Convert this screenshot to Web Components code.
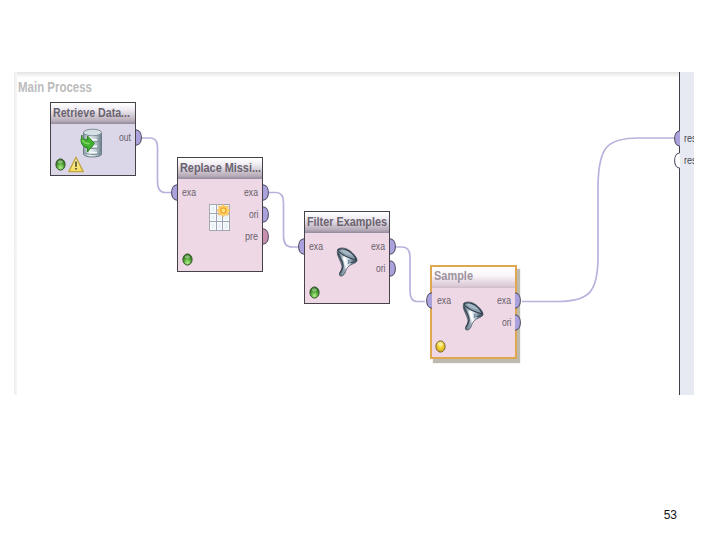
<!DOCTYPE html>
<html lang="en">
<head>
<meta charset="utf-8">
<title>Main Process</title>
<style>
html,body{margin:0;width:720px;height:540px;overflow:hidden;background:#fff;font-family:"Liberation Sans",Arial,sans-serif}
</style>
</head>
<body>
<process-slide></process-slide>
<script>
// One line of text condensed to an exact width.
customElements.define('fit-label', class extends HTMLElement {
  connectedCallback() {
    const w = +this.getAttribute('w'), s = +this.getAttribute('size') || 12, h = Math.ceil(s * 1.3);
    const r = this.attachShadow({mode: 'open'});
    r.innerHTML = `<style>:host{display:block;flex:none;width:${w}px;height:${h}px}svg{display:block;overflow:visible}
      text{font-family:"Liberation Sans",Arial,sans-serif;fill:currentColor}</style>
      <svg width="${w}" height="${h}"><text x="0" y="${Math.round(s)}" font-size="${s}" font-weight="${this.getAttribute('weight') || 400}" textLength="${w}" lengthAdjust="spacingAndGlyphs"></text></svg>`;
    r.querySelector('text').textContent = this.getAttribute('text');
  }
});

// Half-round connector on the edge of a box.
customElements.define('port-knob', class extends HTMLElement {
  connectedCallback() {
    const left = this.getAttribute('side') === 'left';
    const fill = this.getAttribute('fill') || '#aaa2dc';
    this.attachShadow({mode: 'open'}).innerHTML = `<style>:host{display:block;flex:none;width:6px;height:17px}svg{display:block}</style>
      <svg width="6" height="17" ${left ? 'style="transform:scaleX(-1)"' : ''}><path d="M0 .7C3.2 1 5.4 4.2 5.4 8.500S3.200 16 0 16.300" fill="${fill}" stroke="#565168" stroke-width="1.1"/></svg>`;
  }
});

customElements.define('status-light', class extends HTMLElement {
  connectedCallback() {
    const y = this.getAttribute('color') === 'yellow';
    const [a, b, c, d] = y ? ['#fff27c', '#ecca2e', '#cfa21a', '#77622d'] : ['#b6f08e', '#55ac38', '#2b7618', '#3a4f33'];
    this.attachShadow({mode: 'open'}).innerHTML = `<style>:host{display:block}svg{display:block}</style>
      <svg width="11" height="13"><defs><radialGradient id="g" cx=".5" cy="${y ? .35 : .78}" r=".65"><stop offset="0" stop-color="${a}"/><stop offset=".55" stop-color="${b}"/><stop offset="1" stop-color="${c}"/></radialGradient></defs>
      <ellipse cx="5.5" cy="6.5" rx="4.6" ry="5.6" fill="url(#g)" stroke="${d}"/><ellipse cx="5.3" cy="3.8" rx="2.6" ry="1.6" fill="#fff" opacity=".4"/></svg>`;
  }
});

customElements.define('warning-sign', class extends HTMLElement {
  connectedCallback() {
    this.attachShadow({mode: 'open'}).innerHTML = `<style>:host{display:block}svg{display:block}</style>
      <svg width="16" height="17"><defs><linearGradient id="g" x2="0" y2="1"><stop offset="0" stop-color="#fffbc0"/><stop offset="1" stop-color="#f5dc58"/></linearGradient></defs>
      <path d="M8 1.2 15.2 15.6H.8Z" fill="url(#g)" stroke="#c0a545" stroke-width="1.4" stroke-linejoin="round"/>
      <path d="M8 5.500v5.200" stroke="#3c3520" stroke-width="1.5"/><path d="M8 12v1.600" stroke="#3c3520" stroke-width="1.5"/></svg>`;
  }
});

const ICONS = {
  database: `<svg width="28" height="30"><defs><linearGradient id="b"><stop offset="0" stop-color="#8b99a3"/><stop offset=".35" stop-color="#edf3f6"/><stop offset=".65" stop-color="#c3d0d7"/><stop offset="1" stop-color="#667985"/></linearGradient></defs>
    <path d="M5.500 4.500V26c0 4 18 4 18 0V4.500" fill="url(#b)" stroke="#6d7e8b"/>
    <ellipse cx="14.500" cy="4.500" rx="9" ry="3.300" fill="#d6e1e6" stroke="#7d8d99"/>
    <path d="M7 12c2 2.500 14 2.500 16 0M7 18.500c2 2.500 14 2.500 16 0M7 24.500c2 2.500 14 2.500 16 0" fill="none" stroke="#83929d" stroke-width="1.200"/>
    <path d="M14 11.800h5M15 18.400h4M12 24.500h7" stroke="#f8fcfd" stroke-width="1.600"/>
    <path d="M4 7C3.300 10 5 11.700 9.500 11.900V8L16.500 15.500 9.500 24v-4.300C5.500 19.300 3 16 3 12Z" fill="#43b12f" stroke="#2a8420" stroke-width="1"/>
    <path d="M4.500 12c1 2.500 3 3.700 7 3.700" fill="none" stroke="#86da66" stroke-width="1.400"/></svg>`,
  table: `<svg width="24" height="30"><rect x="1.500" y="3.500" width="20" height="26" fill="#f7fbfd" stroke="#a3a7b4"/>
    <path d="M8.500 3.500v26M14.500 3.500v26M1.500 12.500h20M1.500 20.500h20" stroke="#a0a4b2"/>
    <path d="M3.500 5.500h3v5h-3zM3.500 14.500h3v4h-3zM10 14.500h3v4h-3zM16.700 14.500h3v4h-3zM3.500 22.500h3v5h-3zM10 22.500h3v5h-3zM16.700 22.500h3v5h-3z" fill="#e7f0f5"/>
    <path d="m15.300 3.300 1.800 2.300 3-.6-.3 2.900 2.400 1.600-2.400 1.700.4 3-3-.4-1.900 2.200-1.700-2.400-3 .5.600-3-2.500-1.600 2.500-1.600-.5-3 2.900.5Z" fill="#ffd468" stroke="#f5b24c" stroke-width=".7"/>
    <circle cx="15.400" cy="9.400" r="2.600" fill="#ffe27c" stroke="#eda12c" stroke-width="1.200"/></svg>`,
  funnel: `<svg width="24" height="30"><defs><linearGradient id="f" x1="0" y1=".6" x2="1" y2=".35"><stop offset="0" stop-color="#55636f"/><stop offset=".28" stop-color="#8fa5b5"/><stop offset=".42" stop-color="#fbfdfe"/><stop offset=".58" stop-color="#c5d5df"/><stop offset=".75" stop-color="#6f8698"/><stop offset="1" stop-color="#465665"/></linearGradient></defs>
    <path d="M2 2C7-.5 12.500 2 16.500 6c2.700 2.600 4.800 5.500 4.500 7.800-.5 2.200-3.800 2.600-6.500 4.200-3 1.800-4.200 4-5 6.500-.7 2.300-2 4.300-4 4.500-2.200.2-2.700-1.500-1.700-3.200C5.500 23 6.500 21 5.800 18.500 5 14.500.8 8.500 1.200 4.500Z" fill="url(#f)" stroke="#46535f" stroke-width=".8"/>
    <path d="M2 3C6.500 0 13 3 16.500 7c1.600 1.800 3 3.900 3.800 6C15 11.500 5 9 2 3Z" fill="#8ba0b0" stroke="#303c48" stroke-width="1.100"/>
    <path d="M4.500 3.300c4.500-1.100 9 1.700 12.300 5.400C12.500 8.300 7.300 6.400 4.500 3.300Z" fill="#a9bac6"/>
    <path d="M2 5.500c1.200 4 4.300 8 5 12.500.4 3-1.500 5.500-3 8" fill="none" stroke="#384450" stroke-width="1.300"/>
    <path d="M6 10c1.800 3 2.600 5.500 2.700 8.500l1.800-1c.2-2.300-.4-4.300-1.500-6.200Z" fill="#fff"/>
    <path d="M12.500 12.800c.8 1.300.6 2.600-.3 4" fill="none" stroke="#71879a" stroke-width="1.600"/>
    <path d="M14.500 15.800c1.600-.8 3.300-1.200 5-1.500" fill="none" stroke="#3f4f5e" stroke-width="1.200"/>
    <path d="M9.300 22.500 6 27.300" stroke="#8fa0ac" stroke-width="1.200"/></svg>`
};

customElements.define('op-icon', class extends HTMLElement {
  connectedCallback() {
    this.attachShadow({mode: 'open'}).innerHTML = `<style>:host{display:block}svg{display:block}</style>` + ICONS[this.getAttribute('name')];
  }
});

customElements.define('operator-node', class extends HTMLElement {
  connectedCallback() {
    const a = n => this.getAttribute(n);
    const sel = this.hasAttribute('selected');
    const W = {exa: 14, ori: 9.5, out: 12, pre: 13};
    const outs = a('outs').split(' ').map(o => `<div class="row"><fit-label w="${W[o]}" size="11" text="${o}"></fit-label><port-knob ${o === 'pre' ? 'fill="#c98fae"' : ''}></port-knob></div>`).join('');
    const inp = a('in') ? `<div class="row"><port-knob side="left"></port-knob><fit-label w="${W[a('in')]}" size="11" text="${a('in')}"></fit-label></div>` : '';
    this.attachShadow({mode: 'open'}).innerHTML = `<style>
      :host{display:flex;flex-direction:column;box-sizing:border-box;width:${sel ? 87 : 86}px;height:${a('h')}px;
        border:${sel ? '2px solid #dfa850' : '1px solid #45424a'};background:${a('tone') || '#eed8e5'};
        ${sel ? 'box-shadow:3px 4px 1px #bdbab0;' : ''}}
      header{flex:none;height:21px;box-sizing:border-box;padding:0 0 0 2px;
        background:linear-gradient(${sel ? '#fff,#faf5f9 40%,#dccbd8 88%,#cfbdc9' : '#fff,#f1edf3 30%,#b7acb8 85%,#93899b'});color:${sel ? '#9d939e' : '#6a6370'}}
      header fit-label{margin-top:${sel ? -1 : 0}px}
      .body{flex:1;position:relative;display:flex;justify-content:space-between;padding-top:${sel ? 1 : 2}px;color:#66606b}
      .row{display:flex;align-items:center;height:22px;gap:${sel ? 4 : 5}px}
      .in{margin-left:${sel ? -6 : -7}px}
      .in .row{gap:5px}
      .out{margin-right:${sel ? -6 : -7}px;margin-left:auto}
      .out .row{justify-content:flex-end}
      op-icon{position:absolute;left:${a('ix')}px;top:${a('iy')}px}
      .state{position:absolute;left:${sel ? 3 : 4}px;bottom:${a('sb') || 4}px;display:flex;align-items:center;gap:2px}
      </style>
      <header><fit-label w="${a('tw')}" size="13.500" weight="700" text="${a('name')}"></fit-label></header>
      <div class="body"><div class="in">${inp}</div><div class="out">${outs}</div>
      <op-icon name="${a('icon')}"></op-icon>
      <div class="state"><status-light color="${a('light') || 'green'}"></status-light>${this.hasAttribute('warn') ? '<warning-sign></warning-sign>' : ''}</div></div>`;
  }
});

customElements.define('result-rail', class extends HTMLElement {
  connectedCallback() {
    this.attachShadow({mode: 'open'}).innerHTML = `<style>
      :host{display:flex;flex-direction:column;box-sizing:border-box;width:15px;padding-top:55px;border-left:1px solid #3e3e46;background:#e8eaf3;color:#45444c;clip-path:inset(0 0 0 -8px)}
      .row{display:flex;align-items:center;height:22px;gap:4px;margin-left:-6px}</style>
      <div class="row"><port-knob side="left"></port-knob><fit-label w="12.500" size="11" text="res"></fit-label></div>
      <div class="row"><port-knob side="left" fill="#fff"></port-knob><fit-label w="12.500" size="11" text="res"></fit-label></div>`;
  }
});

customElements.define('process-canvas', class extends HTMLElement {
  connectedCallback() {
    this.attachShadow({mode: 'open'}).innerHTML = `<style>
      :host{display:flex;justify-content:space-between;position:relative;width:680px;height:323px;background:linear-gradient(#e3e3e3,#f2f2f2 3px,#fff 6px)}
      .edge{position:absolute;left:0;top:0;width:3px;height:100%;background:linear-gradient(90deg,#eee,#f6f6f6)}
      .title{padding:6px 0 0 4px;color:#bcbcbc}
      .wires{position:absolute;left:0;top:0;fill:none;stroke:#b9b2dc;stroke-width:1.7}
      operator-node{position:absolute}
      result-rail{position:relative}
      </style>
      <div class="edge"></div>
      <div class="title"><fit-label w="74" size="14" weight="700" text="Main Process"></fit-label></div>
      <result-rail></result-rail>
      <svg class="wires" width="680" height="323">
        <path d="M127 66H136Q143.500 66 143.500 75V109Q143.500 120.500 151 120.500H158"/>
        <path d="M254 120.500H262Q269.500 120.500 269.500 131V164Q269.500 175 278 175H285"/>
        <path d="M381 175H388Q396 175 396 185V219Q396 229.500 403 229.500H411"/>
        <path d="M508 229.500H544C575 229.500 584 220 584 185V112C585 76 592 66 625 66H660"/>
      </svg>
      <operator-node style="left:36px;top:30px" h="74" name="Retrieve Data..." tw="77" tone="#dcd7e8" outs="out" icon="database" ix="27" iy="4" warn sb="2"></operator-node>
      <operator-node style="left:163px;top:85px" h="115" name="Replace Missi..." tw="81" in="exa" outs="exa ori pre" icon="table" ix="30" iy="22" sb="5"></operator-node>
      <operator-node style="left:290px;top:139px" h="93" name="Filter Examples" tw="80" in="exa" outs="exa ori" icon="funnel" ix="31" iy="14"></operator-node>
      <operator-node selected style="left:416px;top:193px" h="94" name="Sample" tw="39" in="exa" outs="exa ori" icon="funnel" ix="30" iy="13" light="yellow"></operator-node>`;
  }
});

customElements.define('process-slide', class extends HTMLElement {
  connectedCallback() {
    this.attachShadow({mode: 'open'}).innerHTML = `<style>
      :host{display:flex;flex-direction:column;justify-content:space-between;box-sizing:border-box;width:720px;height:540px;padding:72px 0 18px 14px}
      .page{align-self:flex-end;margin-right:43px;font-size:12px;line-height:14px;color:#111}</style>
      <process-canvas></process-canvas><div class="page">53</div>`;
  }
});
</script>
</body>
</html>
